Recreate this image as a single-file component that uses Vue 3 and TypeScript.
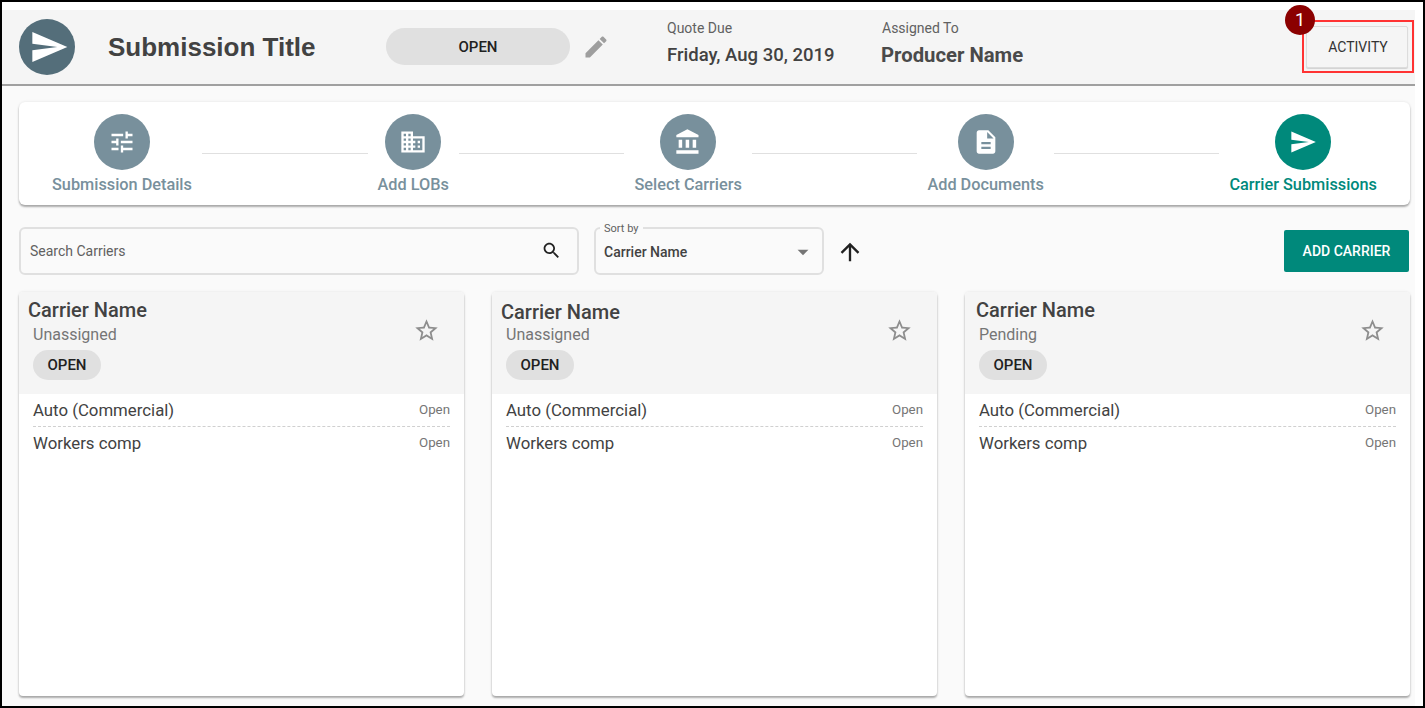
<script setup lang="ts">
const send = 'M2.01 21L23 12 2.01 3 2 10l15 2-15 2z'
const steps = [
  { label: 'Submission Details', d: 'M3 17v2h6v-2H3zM3 5v2h10V5H3zm10 16v-2h8v-2h-8v-2h-2v6h2zM7 9v2H3v2h4v2h2V9H7zm14 4v-2H11v2h10zm-6-4h2V7h4V5h-4V3h-2v6z', active: false },
  { label: 'Add LOBs', d: 'M12 7V3H2v18h20V7H12zM6 19H4v-2h2v2zm0-4H4v-2h2v2zm0-4H4V9h2v2zm0-4H4V5h2v2zm4 12H8v-2h2v2zm0-4H8v-2h2v2zm0-4H8V9h2v2zm0-4H8V5h2v2zm10 12h-8v-2h2v-2h-2v-2h2v-2h-2V9h8v10zm-2-8h-2v2h2v-2zm0 4h-2v2h2v-2z', active: false },
  { label: 'Select Carriers', d: 'M4 10v7h3v-7H4zm6 0v7h3v-7h-3zM2 22h19v-3H2v3zm14-12v7h3v-7h-3zm-4.5-9L2 6v2h19V6l-9.5-5z', active: false },
  { label: 'Add Documents', d: 'M14 2H6c-1.1 0-1.99.9-1.99 2L4 20c0 1.1.89 2 1.99 2H18c1.1 0 2-.9 2-2V8l-6-6zm2 16H8v-2h8v2zm0-4H8v-2h8v2zm-3-5V3.5L18.5 9H13z', active: false },
  { label: 'Carrier Submissions', d: send, active: true },
]
const carriers = [
  { status: 'Unassigned', mod: '' },
  { status: 'Unassigned', mod: 'name-low' },
  { status: 'Pending', mod: 'name-wide' },
]
const lines = ['Auto (Commercial)', 'Workers comp']
</script>

<template>
  <div class="frame">
    <header class="header">
      <div class="logo">
        <svg class="logo-icon" viewBox="0 0 24 24"><path :d="send" /></svg>
      </div>
      <h1 class="title">Submission Title</h1>
      <div class="pill">OPEN</div>
      <svg class="edit" viewBox="0 0 24 24"><path d="M3 17.25V21h3.75L17.81 9.94l-3.75-3.75L3 17.25zM20.71 7.04c.39-.39.39-1.02 0-1.41l-2.34-2.34c-.39-.39-1.02-.39-1.41 0l-1.83 1.83 3.75 3.75 1.83-1.83z" /></svg>
      <div class="meta meta-due">
        <span class="meta-label">Quote Due</span>
        <span class="meta-date">Friday, Aug 30, 2019</span>
      </div>
      <div class="meta meta-assigned">
        <span class="meta-label">Assigned To</span>
        <span class="meta-name">Producer Name</span>
      </div>
      <button class="activity" type="button">ACTIVITY</button>
    </header>

    <main class="main">
      <nav class="stepper">
        <template v-for="(s, i) in steps" :key="s.label">
          <div v-if="i > 0" class="connector"></div>
          <div class="step" :class="{ active: s.active }">
            <div class="step-circle">
              <svg class="step-icon" viewBox="0 0 24 24"><path :d="s.d" /></svg>
            </div>
            <span class="step-label">{{ s.label }}</span>
          </div>
        </template>
      </nav>

      <div class="toolbar">
        <div class="search">
          <span class="search-text">Search Carriers</span>
          <svg class="search-icon" viewBox="0 0 24 24"><path d="M15.5 14h-.79l-.28-.27C15.41 12.59 16 11.11 16 9.5 16 5.91 13.09 3 9.5 3S3 5.91 3 9.5 5.91 16 9.5 16c1.61 0 3.09-.59 4.23-1.57l.27.28v.79l5 4.99L20.49 19l-4.99-5zm-6 0C7.01 14 5 11.99 5 9.5S7.01 5 9.5 5 14 7.01 14 9.5 11.99 14 9.5 14z" /></svg>
        </div>
        <div class="select">
          <span class="select-legend">Sort by</span>
          <span class="select-value">Carrier Name</span>
          <svg class="caret" viewBox="0 0 24 24"><path d="M7 10l5 5 5-5z" /></svg>
        </div>
        <svg class="arrow-up" viewBox="0 0 24 24"><path d="M4 12l1.41 1.41L11 7.83V20h2V7.83l5.58 5.59L20 12l-8-8-8 8z" /></svg>
        <button class="add" type="button">ADD CARRIER</button>
      </div>

      <section class="cards">
        <article v-for="(c, i) in carriers" :key="i" class="card">
          <div class="card-head">
            <div class="card-info">
              <div class="card-name" :class="c.mod">Carrier Name</div>
              <div class="card-status">{{ c.status }}</div>
              <div class="chip">OPEN</div>
            </div>
            <svg class="star" viewBox="0 0 24 24"><path d="M22 9.24l-7.19-.62L12 2 9.19 8.63 2 9.24l5.46 4.73L5.82 21 12 17.27 18.18 21l-1.63-7.03L22 9.24zM12 15.4l-3.76 2.27 1-4.28-3.32-2.88 4.38-.38L12 6.1l1.71 4.04 4.38.38-3.32 2.88 1 4.28L12 15.4z" /></svg>
          </div>
          <ul class="rows">
            <li v-for="l in lines" :key="l" class="row">
              <span class="row-name">{{ l }}</span>
              <span class="row-state">Open</span>
            </li>
          </ul>
        </article>
      </section>
    </main>

    <div class="highlight"></div>
    <div class="badge">1</div>
  </div>
</template>

<style>
html, body { margin: 0; background: #fff; }
</style>

<style scoped>
.frame {
  position: relative;
  box-sizing: border-box;
  width: 1425px;
  height: 708px;
  border: 2px solid #000;
  padding: 8px 8px 0 0;
  display: flex;
  flex-direction: column;
  background: #fff;
  font-family: Roboto, "Liberation Sans", sans-serif;
  overflow: hidden;
}
svg { display: block; fill: currentColor; flex: none; }

.header {
  box-sizing: border-box;
  height: 76px;
  flex: none;
  display: flex;
  align-items: center;
  background: #f5f5f5;
  border-bottom: 2px solid #a0a0a0;
  padding-left: 17px;
}
.logo {
  width: 56px;
  height: 56px;
  border-radius: 50%;
  background: #546e7a;
  display: flex;
  align-items: center;
  justify-content: center;
  color: #fff;
}
.logo-icon { width: 40px; height: 40px; margin-left: 3px; }
.title {
  margin: 0 0 0 33px;
  width: 278px;
  font-size: 26px;
  font-weight: 700;
  color: #424242;
  white-space: nowrap;
  font-family: "Liberation Sans", Roboto, sans-serif;
}
.pill {
  width: 184px;
  height: 37px;
  margin-top: -1px;
  border-radius: 19px;
  background: #e0e0e0;
  color: #212121;
  font-size: 15px;
  font-weight: 500;
  display: flex;
  align-items: center;
  justify-content: center;
}
.edit { width: 28px; height: 28px; margin-left: 12px; color: #9e9e9e; }
.meta { display: flex; flex-direction: column; align-self: flex-start; padding-top: 10px; white-space: nowrap; }
.meta-due { margin-left: 57px; width: 215px; }
.meta-assigned { width: 424px; }
.meta-label { font-size: 14px; line-height: 16px; color: #616161; }
.meta-date { font-size: 18.5px; line-height: 24px; margin-top: 7px; font-weight: 500; color: #424242; }
.meta-name { font-size: 20.3px; line-height: 24px; margin-top: 7px; margin-left: -1px; font-weight: 700; color: #4a4a4a; }
.activity {
  box-sizing: border-box;
  width: 102px;
  height: 42px;
  border: 1px solid #dcdcdc;
  border-radius: 2px;
  background: #f5f5f5;
  box-shadow: 0 1px 1px rgba(0, 0, 0, 0.15);
  color: #333;
  font-family: inherit;
  font-size: 14px;
  font-weight: 400;
  padding: 0 0 0 2px;
}

.main {
  flex: 1;
  min-height: 0;
  display: flex;
  flex-direction: column;
  background: #fafafa;
  padding: 16px 5px 10px 17px;
}
.stepper {
  box-sizing: border-box;
  height: 103px;
  flex: none;
  display: flex;
  align-items: flex-start;
  padding: 12px 23px 0;
  background: #fff;
  border-radius: 6px;
  box-shadow: 0 2px 2px rgba(0, 0, 0, 0.3), 0 0 3px rgba(0, 0, 0, 0.1);
}
.connector { flex: 1; height: 1px; margin-top: 39px; background: #e0e0e0; }
.step {
  display: flex;
  flex-direction: column;
  align-items: center;
  padding: 0 10px;
  color: #78909c;
}
.step.active { color: #00897b; }
.step-circle {
  width: 56px;
  height: 56px;
  border-radius: 50%;
  background: currentColor;
  display: flex;
  align-items: center;
  justify-content: center;
}
.step-icon { width: 28px; height: 28px; color: #fff; }
.step-label { margin-top: 5px; font-size: 16.3px; line-height: 19px; font-weight: 500; white-space: nowrap; }

.toolbar {
  flex: none;
  display: flex;
  align-items: flex-start;
  margin-top: 22px;
  height: 48px;
}
.search {
  box-sizing: border-box;
  width: 560px;
  height: 48px;
  display: flex;
  align-items: center;
  justify-content: space-between;
  padding: 0 15px 0 9px;
  border: 2px solid #e0e0e0;
  border-radius: 6px;
  background: #fafafa;
}
.search-text { font-size: 14px; color: #616161; }
.search-icon { width: 21px; height: 21px; color: #212121; margin-top: -2px; }
.select {
  position: relative;
  box-sizing: border-box;
  width: 230px;
  height: 48px;
  margin-left: 15px;
  display: flex;
  align-items: center;
  justify-content: space-between;
  padding: 1px 6px 0 8px;
  border: 2px solid #e0e0e0;
  border-radius: 6px;
  background: #fafafa;
}
.select-legend {
  position: absolute;
  left: 4px;
  top: -7px;
  padding: 0 5px 0 4px;
  background: #fafafa;
  font-size: 11px;
  line-height: 13px;
  color: #616161;
}
.select-value { font-size: 14px; font-weight: 500; color: #424242; }
.caret { width: 26px; height: 26px; color: #757575; }
.arrow-up { width: 28px; height: 28px; margin: 11px 0 0 12px; color: #212121; }
.add {
  box-sizing: border-box;
  width: 125px;
  height: 42px;
  margin: 3px 1px 0 auto;
  border: 0;
  border-radius: 2px;
  background: #00897b;
  color: #fff;
  font-family: inherit;
  font-size: 14px;
  font-weight: 500;
  padding: 0;
}

.cards {
  flex: 1;
  min-height: 0;
  margin-top: 17px;
  display: grid;
  grid-template-columns: repeat(3, 445px);
  column-gap: 28px;
}
.card {
  background: #fff;
  border-radius: 4px;
  box-shadow: 0 2px 2px rgba(0, 0, 0, 0.3), 0 0 3px rgba(0, 0, 0, 0.1);
  overflow: hidden;
}
.card-head {
  box-sizing: border-box;
  height: 102px;
  display: flex;
  justify-content: space-between;
  align-items: flex-start;
  background: #f5f5f5;
  padding: 0 24px 0 14px;
}
.card-name {
  margin: 7px 0 0 -5px;
  font-size: 20px;
  line-height: 23px;
  font-weight: 500;
  color: #424242;
  white-space: nowrap;
}
.card-name.name-low { margin-top: 9px; margin-bottom: -2px; }
.card-name.name-wide { margin-left: -3px; }
.card-status { margin-top: 3px; font-size: 16px; line-height: 19px; color: #757575; }
.chip {
  box-sizing: border-box;
  width: 68px;
  height: 30px;
  margin-top: 6px;
  border-radius: 15px;
  background: #e0e0e0;
  color: #212121;
  font-size: 15px;
  font-weight: 500;
  display: flex;
  align-items: center;
  justify-content: center;
}
.star { width: 27px; height: 27px; margin-top: 25px; color: #8e8e8e; }
.rows { list-style: none; margin: 0; padding: 0 14px; }
.row {
  box-sizing: border-box;
  height: 32px;
  display: flex;
  justify-content: space-between;
  align-items: center;
}
.row:first-child { height: 33px; border-bottom: 1px dashed #d0d0d0; }
.row-name { font-size: 16.8px; color: #424242; }
.row-state { font-size: 13.3px; margin-top: -1px; color: #757575; }

.highlight {
  position: absolute;
  left: 1300px;
  top: 18px;
  box-sizing: border-box;
  width: 112px;
  height: 53px;
  border: 2px solid #f33;
}
.badge {
  position: absolute;
  left: 1283px;
  top: 3px;
  width: 30px;
  height: 30px;
  border-radius: 50%;
  background: #8b0000;
  color: #fff;
  font-size: 18px;
  line-height: 30px;
  text-align: center;
}
</style>
